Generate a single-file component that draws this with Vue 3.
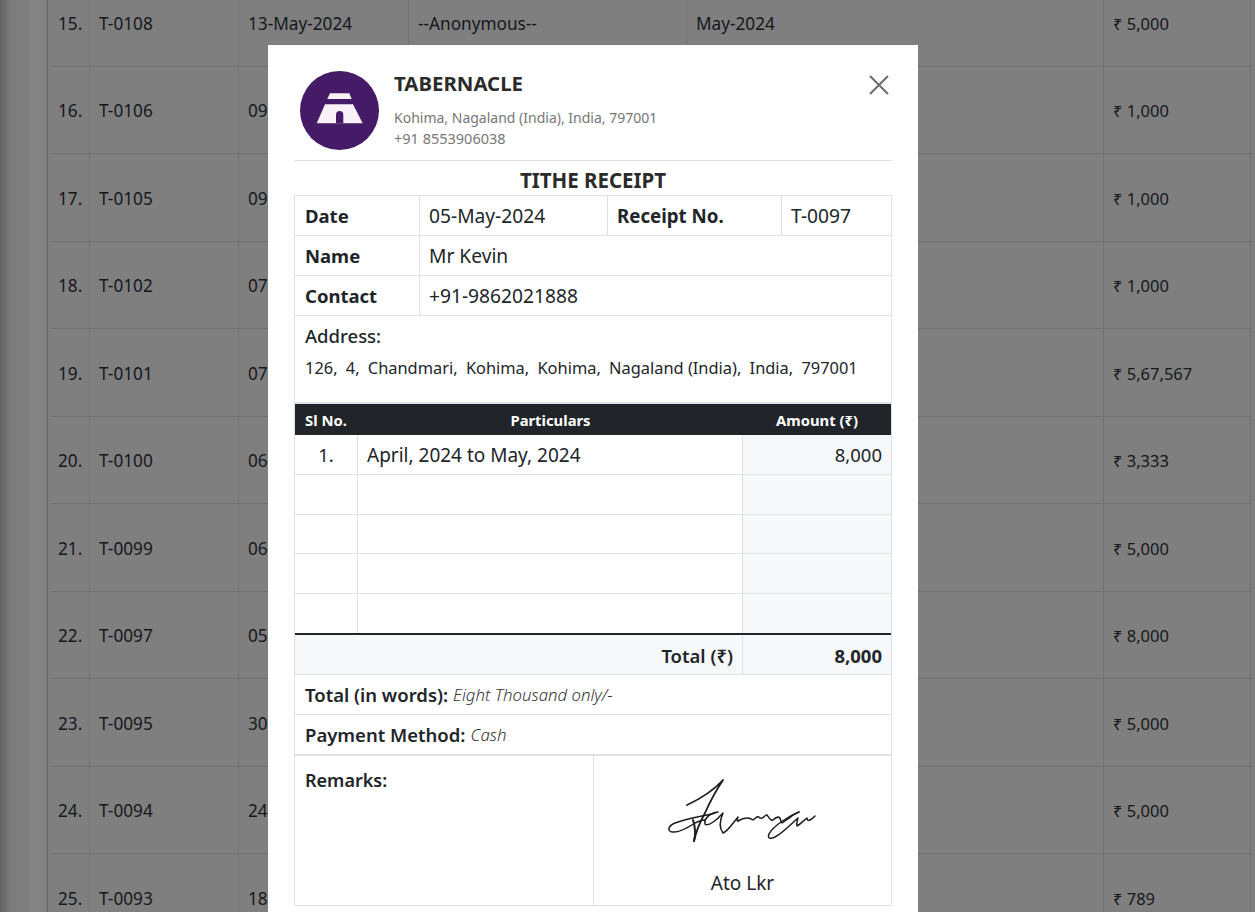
<script setup>
const rows = [
  ['15.', 'T-0108', '13-May-2024', '--Anonymous--', 'May-2024', '₹ 5,000'],
  ['16.', 'T-0106', '09-May-2024', '', '', '₹ 1,000'],
  ['17.', 'T-0105', '09-May-2024', '', '', '₹ 1,000'],
  ['18.', 'T-0102', '07-May-2024', '', '', '₹ 1,000'],
  ['19.', 'T-0101', '07-May-2024', '', '', '₹ 5,67,567'],
  ['20.', 'T-0100', '06-May-2024', '', '', '₹ 3,333'],
  ['21.', 'T-0099', '06-May-2024', '', '', '₹ 5,000'],
  ['22.', 'T-0097', '05-May-2024', '', '', '₹ 8,000'],
  ['23.', 'T-0095', '30-Apr-2024', '', '', '₹ 5,000'],
  ['24.', 'T-0094', '24-Apr-2024', '', '', '₹ 5,000'],
  ['25.', 'T-0093', '18-Apr-2024', '', '', '₹ 789']
]

const emptyRows = [1, 2, 3, 4]
</script>

<template>
  <div class="page">
    <div class="gutter"></div>
    <div class="list">
      <div v-for="row in rows" :key="row[1]" class="list-row">
        <div v-for="(cell, i) in row" :key="i" class="list-cell">{{ cell }}</div>
      </div>
    </div>

    <div class="modal">
      <header class="head">
        <svg class="logo" viewBox="0 0 79 79" width="79" height="79">
          <circle cx="39.5" cy="39.5" r="39.5" fill="#451a66" />
          <path d="M30 22.300H49.300L51.700 28H27.300Z" fill="#f8f2f8" />
          <path d="M25 33.300H53L62.700 52.300H16.700Z" fill="#f8f2f8" />
          <path d="M36 52.300V43.700A3.650 3.650 0 0 1 43.300 43.700V52.300Z" fill="#451a66" />
        </svg>
        <div class="org">
          <h1>TABERNACLE</h1>
          <p>Kohima, Nagaland (India), India, 797001</p>
          <p class="phone">+91 8553906038</p>
        </div>
        <svg class="close" viewBox="0 0 20 20" width="20" height="20">
          <path d="M1 1L19 19M19 1L1 19" stroke="#6c6c6c" stroke-width="2" fill="none" />
        </svg>
      </header>

      <h2 class="title">TITHE RECEIPT</h2>

      <div class="receipt">
        <div class="row info-a">
          <div class="cell"><b>Date</b></div>
          <div class="cell value">05-May-2024</div>
          <div class="cell"><b class="wide">Receipt No.</b></div>
          <div class="cell value">T-0097</div>
        </div>
        <div class="row info-b">
          <div class="cell"><b>Name</b></div>
          <div class="cell value">Mr Kevin</div>
        </div>
        <div class="row info-b">
          <div class="cell"><b>Contact</b></div>
          <div class="cell value">+91-9862021888</div>
        </div>
        <div class="address">
          <div class="address-label">Address:</div>
          <div class="address-text">126, 4, Chandmari, Kohima, Kohima, <span class="tight">Nagaland (India),</span> India, 797001</div>
        </div>

        <div class="items items-head">
          <div>Sl No.</div>
          <div class="center">Particulars</div>
          <div class="center">Amount (₹)</div>
        </div>
        <div class="items item">
          <div class="cell center">1.</div>
          <div class="cell value-md">April, 2024 to May, 2024</div>
          <div class="cell amount">8,000</div>
        </div>
        <div v-for="n in emptyRows" :key="n" class="items item">
          <div class="cell"></div>
          <div class="cell"></div>
          <div class="cell amount"></div>
        </div>
        <div class="total">
          <div class="cell right"><b class="semi">Total (₹)</b></div>
          <div class="cell right"><b>8,000</b></div>
        </div>

        <div class="line"><b class="semi">Total (in words):</b> <i>Eight Thousand only/-</i></div>
        <div class="line"><b class="semi">Payment Method:</b> <i>Cash</i></div>

        <div class="bottom">
          <div class="remarks"><b class="semi">Remarks:</b></div>
          <div class="sign">
            <svg class="signature" viewBox="0 0 170 80" width="170" height="80" fill="none" stroke="#1d1d1d" stroke-width="1.500" stroke-linecap="round" stroke-linejoin="round">
              <path d="M32 35C45 29 58 21 68 10C60 22 54 34 50 43C45 52 41 62 39 71" stroke-width="1.800" />
              <path d="M60 43C50 46 33 48 20 53C13 56 12 61 17 62C24 63 34 57 40 53C44 51 48 50 50 50" />
              <path d="M38 50C40 56 41 63 39 71" stroke-width="2" />
              <path d="M63 42C55 43 49 48 50 54C53 57 62 50 68 43C65 50 64 58 68 63C72 62 78 53 83 47C82 50 82 51 83 51" />
              <path d="M83 51C88 48 94 47 98 50C101 48 103 45 105 48C108 50 110 44 112 45C115 49 116 51 118 50C120 48 123 46 125 48C126 51 126 53 127 53C131 50 135 48 138 45C141 44 143 42 144 42" />
              <path d="M144 42C134 46 118 56 114 64C112 69 116 69 120 67C128 63 136 54 143 48C142 52 141 54 142 56C146 54 149 50 152 48C152 50 153 51 155 50C157 49 159 47 160 46" />
            </svg>
            <div class="sign-name">Ato Lkr</div>
          </div>
        </div>
      </div>
    </div>
  </div>
</template>

<style scoped>
.page {
  position: relative;
  height: 912px;
  overflow: hidden;
  display: flex;
  background: #7f7f7f;
  color: #15181b;
  font-family: "Noto Sans", "Liberation Sans", sans-serif;
}
.gutter {
  width: 48px;
  flex: none;
  background: linear-gradient(90deg, #636363 0, #7a7a7a 10px, #808080 30px, #858585 31px, #828282 46px, #6b6b6b 47px, #6b6b6b 48px);
}
.list {
  flex: 1;
  margin: -21px 4px 0 4px;
}
.list-row {
  display: grid;
  grid-template-columns: 38px 149px 170px 278px 417px 147px;
  height: 87.5px;
  border-bottom: 1px solid #6f6f6f;
  box-sizing: border-box;
  font-size: 17.200px;
}
.list-cell {
  display: flex;
  align-items: center;
  padding: 2px 0 0 9px;
  border-right: 1px solid #717171;
  white-space: nowrap;
}
.list-cell:first-child {
  padding-left: 6px;
}
.list-cell:last-child {
  font-size: 16.500px;
}
.modal {
  position: absolute;
  left: 268px;
  top: 45px;
  width: 650px;
  height: 900px;
  box-sizing: border-box;
  padding: 26px 26px 0 26px;
  background: #fff;
  color: #212529;
}
.head {
  display: flex;
  align-items: flex-start;
  height: 89px;
  padding-left: 6px;
  border-bottom: 1px solid #dee2e6;
}
.logo {
  flex: none;
}
.org {
  flex: 1;
  padding-left: 15px;
}
.org h1 {
  margin: -1px 0 10px;
  font-size: 20.400px;
  line-height: 27px;
  font-weight: 700;
  color: #2b2b2b;
}
.org p {
  margin: 0;
  font-size: 14px;
  line-height: 21px;
  color: #777;
}
.org .phone {
  font-size: 14.500px;
}
.close {
  margin: 4px 3px 0 0;
}
.title {
  margin: 0;
  height: 34px;
  font-size: 20.500px;
  line-height: 38px;
  font-weight: 700;
  text-align: center;
  color: #2b2b2b;
}
.receipt {
  width: 598px;
  border: 1px solid #dee2e6;
  font-size: 18.500px;
  box-sizing: border-box;
}
.row {
  display: grid;
  height: 40px;
  border-bottom: 1px solid #dee2e6;
  box-sizing: border-box;
}
.info-a {
  grid-template-columns: 125px 188px 174px 1fr;
}
.info-b {
  grid-template-columns: 125px 1fr;
}
.cell {
  display: flex;
  align-items: center;
  padding: 0 9px;
  border-right: 1px solid #dee2e6;
  box-sizing: border-box;
  white-space: nowrap;
}
.row .cell:first-child {
  padding-left: 10px;
}
.cell:last-child {
  border-right: 0;
}
.value {
  font-size: 19.200px;
}
.value-md {
  padding-top: 2px;
  font-size: 19px;
}
b {
  font-weight: 700;
}
.wide {
  font-size: 18.700px;
}
.semi {
  font-weight: 600;
}
.address {
  height: 88px;
  padding: 6px 10px 0;
  box-sizing: border-box;
  border-bottom: 2px solid #dee2e6;
}
.address-label {
  font-weight: 500;
  line-height: 28px;
}
.address-text {
  margin-top: 4px;
  font-size: 16.400px;
  line-height: 28px;
  word-spacing: 4px;
  white-space: nowrap;
}
.tight {
  word-spacing: 0;
}
.items {
  display: grid;
  grid-template-columns: 63px 385px 1fr;
}
.items-head {
  height: 31px;
  align-items: center;
  background: #212529;
  color: #fff;
  font-size: 14.800px;
  font-weight: 700;
}
.items-head > div:first-child {
  padding-left: 10px;
}
.item {
  height: 39.800px;
  border-bottom: 1px solid #dee2e6;
  box-sizing: border-box;
}
.center {
  justify-content: center;
  text-align: center;
}
.amount {
  justify-content: flex-end;
  background: #f6f8fa;
}
.total {
  display: grid;
  grid-template-columns: 448px 1fr;
  height: 42px;
  margin-top: -1px;
  border-top: 2px solid #212529;
  border-bottom: 1px solid #dee2e6;
  box-sizing: border-box;
  background: #f6f8fa;
}
.right {
  justify-content: flex-end;
  padding-top: 2px;
}
.line {
  display: flex;
  align-items: center;
  gap: 5px;
  height: 40px;
  padding: 0 10px;
  border-bottom: 1px solid #dee2e6;
  box-sizing: border-box;
}
.line i {
  font-size: 16.800px;
  font-weight: 300;
  color: #333;
}
.bottom {
  display: grid;
  grid-template-columns: 299px 1fr;
  height: 149px;
  border-top: 1px solid #dee2e6;
}
.remarks {
  padding: 10px;
  line-height: 28px;
  border-right: 1px solid #dee2e6;
  font-size: 18px;
}
.sign {
  display: flex;
  flex-direction: column;
  align-items: center;
}
.signature {
  margin: 14px 5px 0 0;
}
.sign-name {
  margin-top: 19px;
  line-height: 28px;
  font-size: 19px;
}
</style>
